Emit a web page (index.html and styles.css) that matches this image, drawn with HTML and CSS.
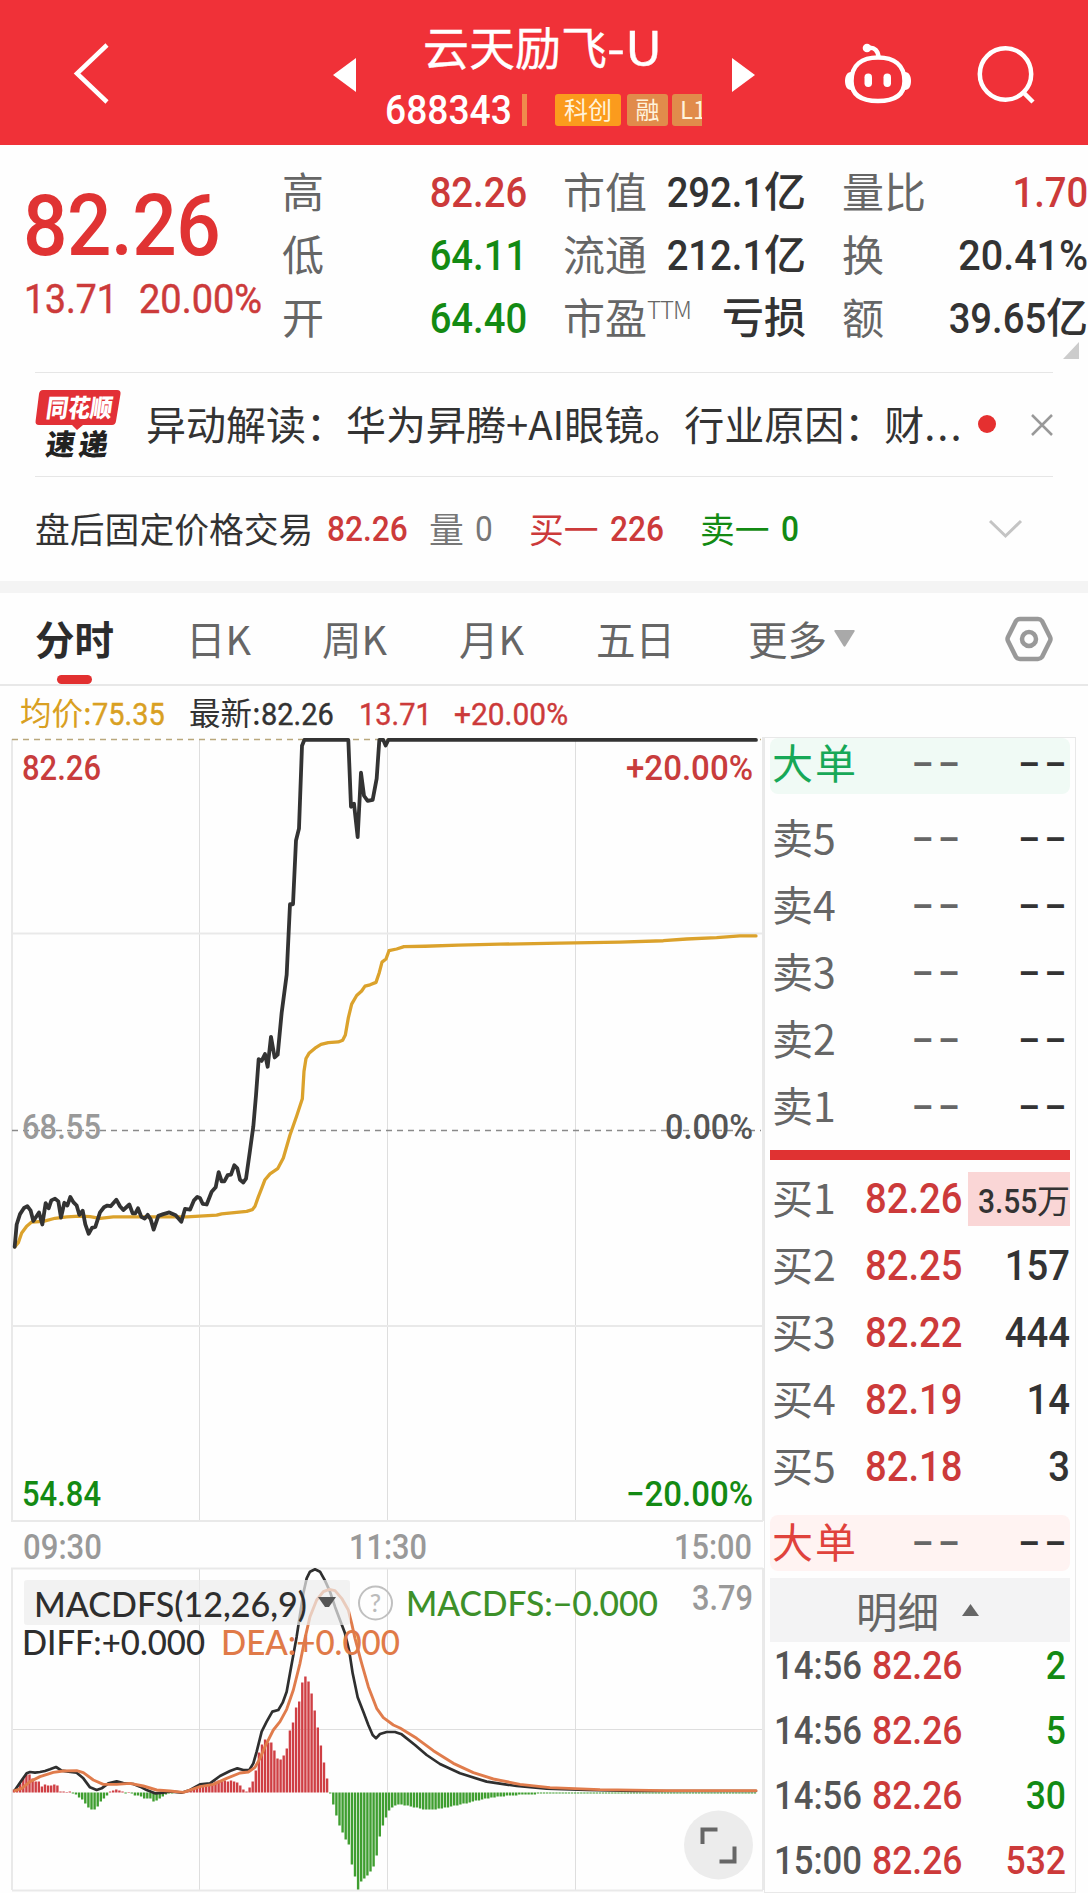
FILE: index.html
```html
<!DOCTYPE html>
<html lang="zh-CN">
<head>
    <meta charset="UTF-8">
    <meta name="viewport" content="width=device-width, initial-scale=1.0">
    <title>云天励飞-U 688343</title>
    <link rel="stylesheet" href="styles.css">
</head>
<body>
    <header class="topbar">
        <svg class="back" width="40" height="64" viewBox="0 0 40 64"><path d="M35 4 L5 32.500 L35 61"/></svg>
        <svg class="prev" width="23" height="34" viewBox="0 0 23 34"><path d="M23 0V34L0 17z"/></svg>
        <div class="stock">
            <h1>云天励飞<span>-U</span></h1>
            <div class="stock-code">
                <span class="num code">688343</span>
                <i class="bar"></i>
                <span class="tag hot">科创</span>
                <span class="tag">融</span>
                <span class="tag cut">L1</span>
            </div>
        </div>
        <svg class="next" width="23" height="34" viewBox="0 0 23 34"><path d="M0 0V34L23 17z"/></svg>
        <svg class="robot" width="68" height="62" viewBox="0 0 68 62">
            <path class="line" d="M34 14.500C50 14.500 60.500 22 60.500 38C60.500 52 51 58 34 58S7.500 52 7.500 38C7.500 22 18 14.500 34 14.500z"/>
            <path class="line" d="M24 5C31 4 34 8 34.500 14"/>
            <circle cx="23" cy="5" r="4.300"/>
            <path d="M7 29C3 29 1 33 1 38s2 9 6 9zM61 29c4 0 6 4 6 9s-2 9-6 9z"/>
            <rect x="20.500" y="30.500" width="7.500" height="13.500" rx="3.700"/>
            <rect x="39.500" y="30.500" width="7.500" height="13.500" rx="3.700"/>
        </svg>
        <svg class="search" width="60" height="60" viewBox="0 0 60 60"><circle cx="29.500" cy="29" r="25.700"/><path d="M47 47L57 57"/></svg>
    </header>

    <section class="quote">
        <div class="price">
            <div class="num last">82.26</div>
            <div class="change"><span class="num">13.71</span><span class="num">20.00%</span></div>
        </div>
        <dl class="stats">
            <dt>高</dt><dd class="red"><span class="num">82.26</span></dd>
            <dt>市值</dt><dd><span class="num">292.1</span>亿</dd>
            <dt>量比</dt><dd class="red"><span class="num">1.70</span></dd>
            <dt>低</dt><dd class="green"><span class="num">64.11</span></dd>
            <dt>流通</dt><dd><span class="num">212.1</span>亿</dd>
            <dt>换</dt><dd><span class="num wide">20.41%</span></dd>
            <dt>开</dt><dd class="green"><span class="num">64.40</span></dd>
            <dt>市盈<sup>TTM</sup></dt><dd>亏损</dd>
            <dt>额</dt><dd><span class="num">39.65</span>亿</dd>
        </dl>
        <svg class="corner" width="16" height="17" viewBox="0 0 16 17"><path d="M16 0V17H0z"/></svg>
    </section>

    <section class="news">
        <svg class="news-logo" width="87" height="72" viewBox="0 0 87 72">
            <path d="M8 1H82Q86 1 85.500 5L81 32Q80.500 36 77 36H48L42 41L37 36H4Q0 36 .6 32L4 5Q4.600 1 8 1z"/>
            <g transform="skewX(-8)">
                <text class="logo-top" x="14" y="27.500" textLength="66" lengthAdjust="spacingAndGlyphs">同花顺</text>
                <text class="logo-bottom" x="19" y="66" textLength="62">速递</text>
            </g>
        </svg>
        <p>异动解读：华为昇腾+AI眼镜。行业原因：财<span>...</span></p>
        <i class="dot"></i>
        <svg class="close" width="22" height="22" viewBox="0 0 22 22"><path d="M1 1L21 21M21 1L1 21"/></svg>
    </section>

    <section class="after">
        <span>盘后固定价格交易</span>
        <span class="num red">82.26</span>
        <span class="gray">量</span><span class="num gray thin">0</span>
        <span class="red">买一</span><span class="num red">226</span>
        <span class="green">卖一</span><span class="num green">0</span>
        <svg width="35" height="20" viewBox="0 0 35 20"><path d="M2 2L17.500 17L33 2"/></svg>
    </section>

    <nav class="tabs">
        <a class="active">分时</a>
        <a>日K</a>
        <a>周K</a>
        <a>月K</a>
        <a>五日</a>
        <a>更多<svg width="21" height="17" viewBox="0 0 21 17"><path d="M1 0H20Q21 0 20.500 1.500L11.500 16Q10.500 17.500 9.500 16L.5 1.500Q0 0 1 0z"/></svg></a>
        <svg class="gear" width="48" height="46" viewBox="0 0 48 46"><path d="M15 3H33Q35.500 3 37 5L45 21Q46 23 45 25L37 41Q35.500 43 33 43H15Q12.500 43 11 41L3 25Q2 23 3 21L11 5Q12.500 3 15 3z"/><circle cx="24" cy="23" r="7"/></svg>
    </nav>

    <div class="legend">
        <span class="avg">均价:<b class="num">75.35</b></span>
        <span>最新:<b class="num">82.26</b></span>
        <span class="red"><b class="num">13.71</b></span>
        <span class="red"><b class="num pct">+20.00%</b></span>
    </div>

    <main class="board">
        <svg class="chart" width="764" height="1158" viewBox="0 735 764 1158">
            <!-- grid -->
            <g class="grid">
                <path d="M199.500 739V1521M387.500 739V1521M575.500 739V1521M199.500 1568V1890M387.500 1568V1890M575.500 1568V1890M11 1729.500H763"/>
                <path class="thick" d="M12 739V1521H763M12 933.500H763M12 1326H763M12 1890V1568.500H763M12 1890.500H763"/>
                <path class="thick" d="M763 737V1521M763 1568V1890"/>
            </g>
            <path class="limit" d="M12 739.500H761"/>
            <path class="zero" d="M12 1130.500H761"/>

            <!-- average and price -->
            <g transform="translate(0 720) scale(.33333 .34435)">
                <polyline class="avg-line" points="44,1530 55,1518 65,1490 80,1470 95,1458 130,1456 165,1447 200,1443 240,1441 270,1442 300,1447 340,1443 560,1443 650,1438 665,1434 740,1427 757,1422 765,1412 775,1385 787,1355 795,1335 810,1318 833,1303 850,1272 870,1205 890,1150 907,1100 912,1020 918,983 927,968 945,953 963,942 985,937 1015,935 1028,930 1036,915 1045,865 1055,825 1070,800 1085,787 1095,773 1110,769 1128,762 1138,733 1146,703 1158,694 1167,670 1190,665 1212,658 1275,657 1375,654 1500,651 1680,648 1860,645 1990,641 2060,636 2150,632 2220,627 2268,627"/>
                <polyline class="price-line" points="44,1530 50,1465 60,1435 72,1417 82,1412 92,1425 100,1455 117,1430 127,1465 137,1403 146,1418 154,1395 165,1390 175,1398 183,1445 193,1402 202,1410 211,1385 220,1400 230,1410 238,1437 248,1425 256,1465 266,1492 276,1475 286,1472 300,1430 312,1415 322,1410 332,1412 349,1393 360,1412 370,1423 388,1407 398,1433 406,1433 414,1418 424,1443 434,1448 443,1437 452,1450 461,1480 475,1440 490,1435 508,1430 527,1438 544,1457 555,1420 570,1422 582,1395 592,1385 600,1388 608,1405 620,1407 635,1370 647,1357 656,1313 665,1340 673,1340 683,1322 693,1320 703,1293 712,1302 720,1335 730,1343 738,1332 750,1250 760,1180 768,1090 776,985 785,990 795,970 803,1007 813,920 824,980 833,972 845,850 860,740 870,535 879,535 888,350 897,315 906,75 913,58 1045,58 1053,252 1062,243 1073,340 1083,153 1092,220 1103,235 1118,232 1130,170 1138,58 1150,58 1157,74 1165,58 2268,58"/>
            </g>

            <g class="labels">
                <text class="t-red" x="22" y="780" textLength="79" lengthAdjust="spacingAndGlyphs">82.26</text>
                <text class="t-red" x="626" y="780" textLength="127" lengthAdjust="spacingAndGlyphs">+20.00%</text>
                <text class="t-gray" x="22" y="1139" textLength="79" lengthAdjust="spacingAndGlyphs">68.55</text>
                <text class="t-dark" x="665" y="1139" textLength="88" lengthAdjust="spacingAndGlyphs">0.00%</text>
                <text class="t-green" x="22" y="1505.500" textLength="79" lengthAdjust="spacingAndGlyphs">54.84</text>
                <text class="t-green" x="626" y="1505.500" textLength="127" lengthAdjust="spacingAndGlyphs">−20.00%</text>
                <text class="t-gray" x="23" y="1559" textLength="79" lengthAdjust="spacingAndGlyphs">09:30</text>
                <text class="t-gray" x="349" y="1559" textLength="78" lengthAdjust="spacingAndGlyphs">11:30</text>
                <text class="t-gray" x="674" y="1559" textLength="78" lengthAdjust="spacingAndGlyphs">15:00</text>
            </g>

            <!-- macd -->
            <g id="bars"></g>
            <g transform="translate(0 1460) scale(.33333)">
                <polyline class="diff" points="45,990 60,968 80,940 90,936 105,938 120,936 135,933 150,928 168,921 185,932 205,935 230,938 250,955 270,982 290,990 305,985 325,970 350,964 370,969 400,972 420,980 440,990 465,1000 490,998 510,994 545,998 570,990 600,973 630,970 660,948 690,933 712,925 730,930 748,930 760,910 770,875 785,815 800,785 817,755 835,750 848,728 860,695 870,640 880,585 890,530 900,465 910,400 920,355 930,335 945,328 960,335 975,362 990,395 1005,440 1020,480 1035,520 1048,575 1058,640 1073,712 1090,755 1105,795 1118,825 1128,835 1140,822 1160,816 1185,816 1205,823 1245,855 1280,885 1320,912 1380,940 1460,965 1550,978 1640,986 1760,990 1900,993 2268,993"/>
                <polyline class="dea" points="45,992 65,985 90,965 120,950 160,937 190,933 230,932 250,938 280,960 310,973 350,973 390,970 430,978 470,990 510,993 550,997 600,980 640,973 680,955 720,939 745,936 765,922 780,895 795,860 820,810 840,785 860,748 880,690 900,610 915,535 930,470 950,420 970,395 988,388 1005,392 1025,415 1045,450 1055,490 1065,535 1085,610 1105,680 1130,745 1150,773 1180,795 1200,804 1250,835 1300,872 1360,910 1420,938 1480,957 1560,973 1650,983 1800,989 2000,992 2268,992"/>
            </g>
            <rect class="select" x="24" y="1580" width="326" height="45" rx="3"/>
            <path class="arrow" d="M318 1597H336L329 1607H325z"/>
            <circle class="help" cx="375.500" cy="1603" r="16.500"/>
            <g class="labels macd">
                <text class="t-help" x="375.500" y="1612" text-anchor="middle">?</text>
                <text class="t-black" x="34" y="1616.500" textLength="273" lengthAdjust="spacingAndGlyphs">MACDFS(12,26,9)</text>
                <text class="t-leaf" x="406" y="1616" textLength="252" lengthAdjust="spacingAndGlyphs">MACDFS:−0.000</text>
                <text class="t-gray din" x="692" y="1610" textLength="61" lengthAdjust="spacingAndGlyphs">3.79</text>
                <text class="t-black" x="22" y="1654.500" textLength="183" lengthAdjust="spacingAndGlyphs">DIFF:+0.000</text>
                <text class="t-orange" x="221" y="1654.500" textLength="179" lengthAdjust="spacingAndGlyphs">DEA:+0.000</text>
            </g>
            <circle class="full" cx="718.500" cy="1845" r="34.500"/>
            <path class="full-icon" d="M702.500 1844V1829.500H717.500M734.500 1846.500V1861.500H719.500"/>
        </svg>

        <aside class="depth">
            <div class="row big sell"><span>大单</span><i>--</i><i class="dark">--</i></div>
            <div class="row"><span>卖5</span><i>--</i><i class="dark">--</i></div>
            <div class="row"><span>卖4</span><i>--</i><i class="dark">--</i></div>
            <div class="row"><span>卖3</span><i>--</i><i class="dark">--</i></div>
            <div class="row"><span>卖2</span><i>--</i><i class="dark">--</i></div>
            <div class="row"><span>卖1</span><i>--</i><i class="dark">--</i></div>
            <div class="split"></div>
            <div class="row"><span>买1</span><b class="num">82.26</b><em class="flash"><b class="num">3.55</b>万</em></div>
            <div class="row"><span>买2</span><b class="num">82.25</b><em class="num">157</em></div>
            <div class="row"><span>买3</span><b class="num">82.22</b><em class="num">444</em></div>
            <div class="row"><span>买4</span><b class="num">82.19</b><em class="num">14</em></div>
            <div class="row"><span>买5</span><b class="num">82.18</b><em class="num">3</em></div>
            <div class="row big buy"><span>大单</span><i>--</i><i class="dark">--</i></div>
            <div class="detail">明细<svg width="17" height="12" viewBox="0 0 17 12"><path d="M8.500 0L17 12H0z"/></svg></div>
            <div class="tick"><span class="num">14:56</span><b class="num">82.26</b><em class="num green">2</em></div>
            <div class="tick"><span class="num">14:56</span><b class="num">82.26</b><em class="num green">5</em></div>
            <div class="tick"><span class="num">14:56</span><b class="num">82.26</b><em class="num green">30</em></div>
            <div class="tick"><span class="num">15:00</span><b class="num">82.26</b><em class="num red">532</em></div>
        </aside>
    </main>

    <script src="script.js"></script>
</body>
</html>
```
FILE: styles.css
```css
* {
    padding: 0;
    margin: 0;
    box-sizing: border-box;
}
body {
    width: 1088px;
    height: 1893px;
    overflow: hidden;
    background: #fefefe;
    color: #333;
    font-family: Roboto, "Noto Sans CJK SC", sans-serif;
}
svg {
    display: block;
    flex: none;
}
i, em {
    font-style: normal;
}
.num {
    display: inline-block;
    font-family: Roboto, sans-serif;
    font-weight: 500;
    transform: scaleX(.91);
    transform-origin: left;
}
.red { color: #cc3a3a; }
.green { color: #138a13; }
.gray { color: #777; }

/* top bar */
.topbar {
    height: 145px;
    display: flex;
    background: #f03138;
    color: #fff;
    fill: #fff;
}
.back {
    margin: 41px 0 0 72px;
    fill: none;
    stroke: #fff;
    stroke-width: 4.5;
}
.prev { margin: 58px 0 0 221px; }
.next { margin: 58px 0 0 29px; }
.stock {
    width: 318px;
    margin-left: 29px;
}
.stock h1 {
    height: 88px;
    padding-left: 38px;
    line-height: 91px;
    font-family: "Noto Sans CJK SC", sans-serif;
    font-size: 46px;
    font-weight: 400;
    white-space: nowrap;
    -webkit-text-stroke: .4px;
}
.stock h1 span {
    display: inline-block;
    transform: scaleX(1.120);
    transform-origin: left;
}
.stock-code {
    display: flex;
    width: 318px;
    height: 48px;
    padding-top: 6px;
}
.code {
    width: 137px;
    font-size: 40px;
    line-height: 33px;
    transform: scaleX(.93);
}
.bar {
    width: 5px;
    height: 32px;
    background: #f08a4c;
}
.tag {
    width: 41px;
    height: 32px;
    margin-left: 6px;
    border-radius: 3px;
    background: #e18b4b;
    color: #fff3dc;
    font: 24px/29px "Noto Sans CJK SC", sans-serif;
    text-align: center;
}
.hot {
    width: 66px;
    margin-left: 28px;
    background: #fb9b1d;
}
.cut {
    width: 30px;
    margin-left: 4px;
    padding-left: 8px;
    text-align: left;
    overflow: hidden;
    border-radius: 3px 0 0 3px;
}
.robot { margin: 43px 0 0 89px; }
.robot .line, .search {
    fill: none;
    stroke: #fff;
    stroke-width: 4.5;
}
.search { margin: 45px 0 0 64px; }

/* quote */
.quote {
    position: relative;
    height: 227px;
    display: flex;
}
.price {
    width: 282px;
    padding: 30px 0 0 23px;
    color: #e03333;
}
.last {
    font-size: 86px;
    line-height: 101px;
    height: 101px;
    letter-spacing: -.5px;
}
.change {
    display: grid;
    grid-template-columns: 115px 130px;
    margin-left: 1px;
    line-height: 46px;
    color: #cc3a3a;
    font-size: 41px;
}
.change .num { font-weight: 400; -webkit-text-stroke: .5px; }
.change .num + .num { transform: scaleX(.925); }
.stats {
    width: 806px;
    padding-top: 16px;
    display: grid;
    grid-template-columns: 100px 145px 116px 163px 110px 172px;
    grid-auto-rows: 63px;
    line-height: 63px;
    font-size: 42px;
    white-space: nowrap;
}
.stats dt {
    color: #666;
    font-family: "Noto Sans CJK SC", sans-serif;
    line-height: 58px;
}
.stats dt:nth-of-type(3n+2), .stats dt:nth-of-type(3n) { padding-left: 36px; }
.stats dd {
    text-align: right;
    font-weight: 500;
}
.stats .num { transform-origin: right; }
.stats .wide { transform: scaleX(.94); }
.stats sup {
    font-size: 24px;
    line-height: 0;
    font-weight: 300;
    vertical-align: 15px;
    letter-spacing: -1px;
}
.corner {
    position: absolute;
    right: 9px;
    top: 197px;
    fill: #ccc;
}

/* news */
.news {
    height: 105px;
    margin: 0 35px;
    border-top: 1.500px solid #e6e6e6;
    border-bottom: 1.500px solid #e6e6e6;
    display: flex;
    align-items: center;
}
.news-logo {
    margin-right: 24px;
    fill: #e23036;
    overflow: visible;
}
.news-logo text {
    font-family: "Noto Sans CJK SC", sans-serif;
    font-weight: 900;
}
.logo-top { font-size: 25px; fill: #fff; }
.logo-bottom { font-size: 29px; fill: #222; }
.news p {
    width: 832px;
    padding-bottom: 4px;
    font: 40px/60px "Noto Sans CJK SC", sans-serif;
    white-space: nowrap;
}
.news p span { letter-spacing: 2px; }
.dot {
    width: 18px;
    height: 18px;
    margin-bottom: 2px;
    border-radius: 50%;
    background: #e53030;
}
.close {
    margin-left: 35px;
    stroke: #999;
    stroke-width: 2.500;
}

/* after-hours line */
.after {
    height: 104px;
    padding-left: 35px;
    display: grid;
    grid-template-columns: 292px 102px 46px 54px 81px 90px 81px 207px 35px;
    align-items: center;
    font-size: 34.800px;
    white-space: nowrap;
}
.after span:not(.num) { padding-bottom: 3px; }
.after .thin { font-weight: 400; }
.after svg {
    fill: none;
    stroke: #c4c4c4;
    stroke-width: 3;
}

/* tabs */
.tabs {
    height: 105px;
    border-top: 12px solid #f4f4f4;
    border-bottom: 2px solid #e8e8e8;
    display: grid;
    grid-template-columns: 151px 136px 137px 137px 152px 257px 48px;
    padding-left: 35px;
    color: #666;
    font: 39.500px/90px "Noto Sans CJK SC", sans-serif;
}
.tabs a {
    position: relative;
    display: flex;
}
.tabs a svg {
    margin: 37px 0 0 7px;
    fill: #a9a9a9;
}
.tabs .active {
    color: #2c2c2c;
    font-weight: 700;
}
.active::after {
    content: "";
    position: absolute;
    left: 22px;
    bottom: 0;
    width: 35px;
    height: 9px;
    border-radius: 5px;
    background: #e23030;
}
.gear {
    margin: 23px 0 0 0;
    fill: none;
    stroke: #999;
    stroke-width: 4.500;
}

/* legend */
.legend {
    height: 49px;
    padding-left: 20px;
    display: grid;
    grid-template-columns: 169px 170px 95px 140px;
    font: 31.500px/51px "Noto Sans CJK SC", sans-serif;
}
.legend .num {
    font-weight: 400;
    transform: scaleX(.92);
    -webkit-text-stroke: .4px;
}
.legend .pct { transform: scaleX(.95); }
.avg { color: #d9a022; }

.board {
    display: flex;
}

/* chart */
.grid path {
    fill: none;
    stroke: #dedede;
    stroke-width: 1;
}
.grid .thick {
    stroke: #e9e9e9;
    stroke-width: 2;
}
.limit, .zero {
    stroke: #b9a77c;
    stroke-width: 1.500;
    stroke-dasharray: 6 5;
}
.zero { stroke: #8a8a8a; }
polyline {
    fill: none;
    stroke-width: 3;
    stroke-linejoin: round;
    stroke-linecap: round;
    vector-effect: non-scaling-stroke;
}
.avg-line { stroke: #dba22c; stroke-width: 3.300; }
.price-line { stroke: #333; stroke-width: 3.800; }
.diff { stroke: #2f2f2f; stroke-width: 2.700; }
.dea { stroke: #e07c4c; stroke-width: 2.900; }
.bar-up { fill: #cf3f44; }
.bar-down { fill: #3f9e30; }
.labels text {
    font-family: Roboto, sans-serif;
    font-size: 34.500px;
    font-weight: 500;
}
.labels .t-gray { fill: #999; }
.t-red { fill: #c83c3c; }
.t-dark { fill: #555; }
.t-green { fill: #138a13; }
.t-black { fill: #2e2e2e; }
.t-leaf { fill: #3d9029; }
.t-orange { fill: #e07a48; }
.labels.macd text {
    font-family: Lato, sans-serif;
    font-size: 35px;
}
.labels.macd .din { font-family: Roboto, sans-serif; }
.labels.macd .t-help {
    font-size: 25px;
    fill: #bbb;
}
.select { fill: #ececec; fill-opacity: .7; }
.arrow { fill: #555; }
.help {
    fill: none;
    stroke: #c0c0c0;
    stroke-width: 2;
}
.full { fill: #ececec; }
.full-icon {
    fill: none;
    stroke: #666;
    stroke-width: 4;
}

/* order book */
.depth {
    width: 312px;
    height: 1156px;
    padding: 0 5px;
    border: 1px solid #e8e8e8;
    margin-top: 2px;
}
.row, .tick {
    height: 67.200px;
    padding-left: 2px;
    display: grid;
    grid-template-columns: 93px 101px 104px;
    align-items: center;
    font: 41px/60px "Noto Sans CJK SC", sans-serif;
    color: #666;
}
.row span { padding-bottom: 6px; }
.row b, .tick b {
    color: #cc3a3a;
}
.row i {
    padding-bottom: 4px;
    font-family: Inter, sans-serif;
    font-weight: 500;
    transform: scaleX(1.270);
    transform-origin: right;
    letter-spacing: 1.800px;
    text-align: right;
    line-height: 50px;
}
.row i:nth-child(2) { padding-right: 2px; }
.row .dark { color: #333; }
.row em, .tick em {
    text-align: right;
    transform-origin: right;
}
.row em { color: #333; }
.row .num, .tick .num { font-size: 42px; }
.big {
    height: 56px;
    margin-bottom: 11px;
    border-radius: 8px;
    letter-spacing: 2px;
}
.big span, .big i { line-height: 44px; }
.sell {
    padding-bottom: 5px;
    background: #f0faf5;
}
.sell span { color: #17a857; }
.buy {
    margin: 14px 0 7px;
    background: #fff3f2;
}
.buy span { color: #e0423c; }
.split {
    height: 10px;
    margin: 9px 0 5px;
    background: #e03232;
}
.row .flash {
    height: 54px;
    margin-left: 2px;
    background: #fad6d6;
    font-size: 33px;
    line-height: 54px;
    white-space: nowrap;
}
.row .flash .num {
    color: #333;
    font-size: 33px;
    transform-origin: right;
}
.detail {
    height: 64px;
    margin-bottom: -8px;
    display: flex;
    justify-content: center;
    align-items: center;
    gap: 23px;
    padding-right: 5px;
    background: #f3f3f4;
    color: #666;
    font: 41.500px/60px "Noto Sans CJK SC", sans-serif;
    fill: #666;
}
.tick {
    height: 65px;
    padding: 0 4px 0 4px;
    grid-template-columns: 98px 99px 95px;
}
.tick .num { font-size: 39px; }
.tick span.num {
    padding: 0;
    color: #555;
    transform: scaleX(.89);
}
.tick .red { color: #cc3a3a; }
.tick .green { color: #138a13; }
```
FILE: script.js
```js
// one bar per trading minute, height in px, negative goes below the axis
const macd = [
    3, 5, 9, 14, 18, 18, 14, 11, 11, 6, 8, 7, 7, 8, 7, 1, 1, .5, 1, -1,
    -2, -5, -7, -11, -15, -17, -17, -14, -9, -6, -3, 1, 2, 3, 2, 1, -1, .5, -1, -3,
    -3, -4, -6, -6, -6, -9, -8, -6, -4, -2, -1, -1, .5, .5, -1, 1, 2, 3, 5, 7,
    8, 8, 8, 8, 9, 11, 12, 11, 12, 11, 12, 11, 10, 7, 3, 1, 5, 11, 22, 40,
    48, 53, 50, 50, 42, 34, 33, 37, 44, 62, 70, 85, 91, 110, 116, 111, 99, 82, 65, 47,
    30, 14, -1, -12, -23, -33, -40, -47, -52, -72, -84, -97, -89, -86, -83, -79, -74, -63, -44, -33,
    -25, -18, -15, -13, -12, -12, -13, -13, -14, -15, -15, -16, -17, -17, -17, -17, -17, -16, -16, -15,
    -15, -14, -13, -13, -12, -11, -11, -10, -9, -8, -8, -7, -6, -6, -5, -5, -4, -4, -4, -3,
    -3, -3, -3, -2, -2, -2, -2, -2, -2
];
while (macd.length < 240) macd.push(-1);

const axis = 1792.5;
const bars = document.getElementById('bars');

macd.forEach((value, i) => {
    const rect = document.createElementNS('http://www.w3.org/2000/svg', 'rect');
    rect.setAttribute('x', 12.8 + i * 3.1);
    rect.setAttribute('y', value > 0 ? axis - value : axis);
    rect.setAttribute('width', 2.4);
    rect.setAttribute('height', Math.abs(value));
    rect.setAttribute('class', value > 0 ? 'bar-up' : 'bar-down');
    bars.appendChild(rect);
});
```
